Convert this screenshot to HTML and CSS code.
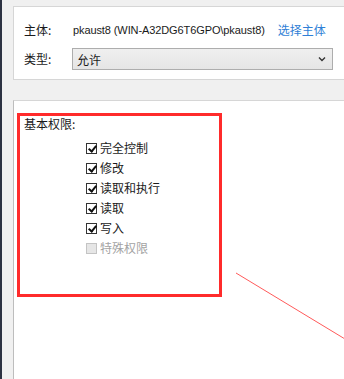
FILE: index.html
```html
<!DOCTYPE html>
<html lang="zh-CN">
<head>
<meta charset="utf-8">
<link rel="stylesheet" href="styles.css">
</head>
<body>
<div class="window">
  <div class="strip"></div>
  <div class="main">
    <div class="top-panel">
      <div class="label">主体:</div>
      <div class="value"><span class="account">pkaust8 (WIN-A32DG6T6GPO\pkaust8)</span><a class="link">选择主体</a></div>
      <div class="label">类型:</div>
      <div class="select">
        <span>允许</span>
        <svg class="chev" width="8" height="6" viewBox="0 0 8 6"><path d="M1 1.5 L4 4.5 L7 1.5" fill="none" stroke="#333" stroke-width="1.4"/></svg>
      </div>
    </div>
    <div class="bottom-panel">
      <div class="highlight">
        <div class="heading">基本权限:</div>
        <ul class="perms">
          <li><span class="cb on"></span>完全控制</li>
          <li><span class="cb on"></span>修改</li>
          <li><span class="cb on"></span>读取和执行</li>
          <li><span class="cb on"></span>读取</li>
          <li><span class="cb on"></span>写入</li>
          <li class="disabled"><span class="cb"></span>特殊权限</li>
        </ul>
      </div>
    </div>
  </div>
</div>
<svg class="annot" width="344" height="379" viewBox="0 0 344 379"><line x1="236" y1="273" x2="345" y2="339" stroke="#ff5a5a" stroke-width="1"/></svg>
</body>
</html>
```
FILE: styles.css
```css
html, body {
  margin: 0;
  padding: 0;
  height: 100%;
  overflow: hidden;
}
body {
  background: #f0f0f0;
  font-family: "Noto Sans CJK SC", "Noto Sans", sans-serif;
  font-size: 12px;
  color: #1a1a1a;
  position: relative;
}
.window {
  display: flex;
  height: 379px;
}
.strip {
  width: 2px;
  background: #2c3242;
  flex: none;
}
.main {
  flex: 1;
  display: flex;
  flex-direction: column;
  padding: 6px 0 0 11px;
  min-width: 0;
}
.top-panel {
  box-sizing: border-box;
  height: 74px;
  background: #fff;
  border: 1px solid #d6d6d6;
  border-right: none;
  padding: 15px 11px 0 10px;
  display: grid;
  grid-template-columns: 48px minmax(0, 1fr);
  grid-template-rows: 16px 22px;
  row-gap: 10px;
  align-items: center;
}
.label {
  line-height: 16px;
  color: #1a1a1a;
}
.value {
  line-height: 16px;
  white-space: nowrap;
  display: flex;
  align-items: center;
}
.account {
  font-family: "Liberation Sans", Arial, sans-serif;
  font-size: 11px;
  letter-spacing: -0.1px;
  padding-left: 1px;
}
.link {
  color: #2f7fd6;
  margin-left: 13px;
}
.select {
  box-sizing: border-box;
  height: 22px;
  border: 1px solid #adadad;
  background: linear-gradient(#efefef, #e5e5e5);
  display: flex;
  align-items: center;
  justify-content: space-between;
  padding: 0 6px 0 4px;
}
.chev {
  display: block;
}
.bottom-panel {
  flex: 1;
  margin-top: 20px;
  background: #fff;
  border-top: 1px solid #d6d6d6;
  border-left: 1px solid #bdbdbd;
  padding: 12px 0 0 3px;
}
.highlight {
  box-sizing: border-box;
  width: 205px;
  height: 184px;
  border: 3px solid #ff2b2b;
  padding: 0 0 0 4px;
}
.heading {
  line-height: 16px;
}
.perms {
  list-style: none;
  margin: 6px 0 0 0;
  padding: 0 0 0 62px;
}
.perms li {
  height: 20px;
  line-height: 20px;
  display: flex;
  align-items: center;
  gap: 3px;
}
.cb {
  box-sizing: border-box;
  width: 11px;
  height: 11px;
  border: 1px solid #333;
  background: #fff;
  flex: none;
  position: relative;
}
.cb.on::after {
  content: "";
  position: absolute;
  left: 3px;
  top: 0px;
  width: 3px;
  height: 6px;
  border: solid #111;
  border-width: 0 2px 2px 0;
  transform: rotate(40deg);
}
.perms li.disabled {
  color: #a3a3a3;
}
.perms li.disabled .cb {
  border-color: #c4c4c4;
  background: #e6e6e6;
}
.annot {
  position: absolute;
  left: 0;
  top: 0;
  pointer-events: none;
}
```
